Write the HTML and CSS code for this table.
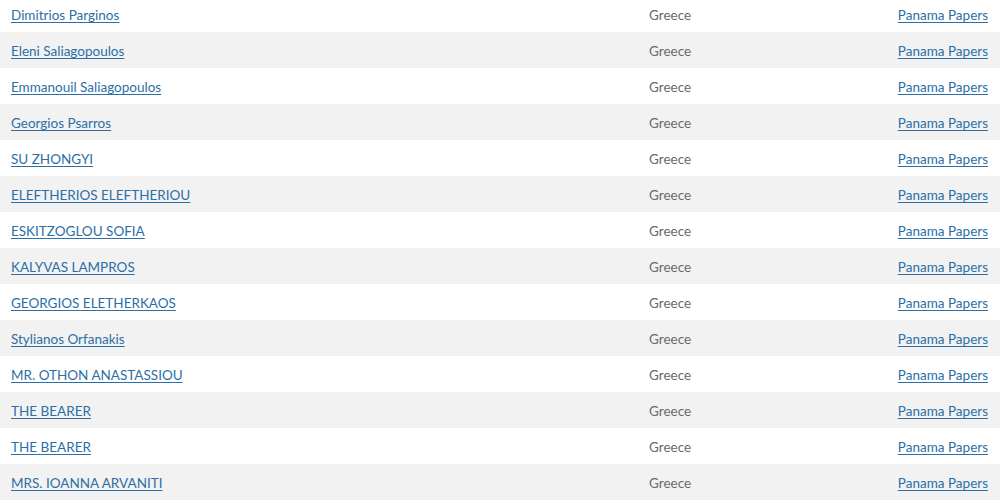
FILE: index.html
```html
<!DOCTYPE html>
<html>
<head>
<meta charset="utf-8">
<link rel="stylesheet" href="styles.css">
</head>
<body>
<table class="results">
  <colgroup><col class="c-name"><col class="c-country"><col class="c-source"></colgroup>
  <tbody>
    <tr><td><a href="#">Dimitrios Parginos</a></td><td class="country">Greece</td><td class="source"><a href="#">Panama Papers</a></td></tr>
    <tr><td><a href="#">Eleni Saliagopoulos</a></td><td class="country">Greece</td><td class="source"><a href="#">Panama Papers</a></td></tr>
    <tr><td><a href="#">Emmanouil Saliagopoulos</a></td><td class="country">Greece</td><td class="source"><a href="#">Panama Papers</a></td></tr>
    <tr><td><a href="#">Georgios Psarros</a></td><td class="country">Greece</td><td class="source"><a href="#">Panama Papers</a></td></tr>
    <tr><td><a href="#">SU ZHONGYI</a></td><td class="country">Greece</td><td class="source"><a href="#">Panama Papers</a></td></tr>
    <tr><td><a href="#">ELEFTHERIOS ELEFTHERIOU</a></td><td class="country">Greece</td><td class="source"><a href="#">Panama Papers</a></td></tr>
    <tr><td><a href="#">ESKITZOGLOU SOFIA</a></td><td class="country">Greece</td><td class="source"><a href="#">Panama Papers</a></td></tr>
    <tr><td><a href="#">KALYVAS LAMPROS</a></td><td class="country">Greece</td><td class="source"><a href="#">Panama Papers</a></td></tr>
    <tr><td><a href="#">GEORGIOS ELETHERKAOS</a></td><td class="country">Greece</td><td class="source"><a href="#">Panama Papers</a></td></tr>
    <tr><td><a href="#">Stylianos Orfanakis</a></td><td class="country">Greece</td><td class="source"><a href="#">Panama Papers</a></td></tr>
    <tr><td><a href="#">MR. OTHON ANASTASSIOU</a></td><td class="country">Greece</td><td class="source"><a href="#">Panama Papers</a></td></tr>
    <tr><td><a href="#">THE BEARER</a></td><td class="country">Greece</td><td class="source"><a href="#">Panama Papers</a></td></tr>
    <tr><td><a href="#">THE BEARER</a></td><td class="country">Greece</td><td class="source"><a href="#">Panama Papers</a></td></tr>
    <tr><td><a href="#">MRS. IOANNA ARVANITI</a></td><td class="country">Greece</td><td class="source"><a href="#">Panama Papers</a></td></tr>
  </tbody>
</table>
</body>
</html>
```
FILE: styles.css
```css
html, body {
  margin: 0;
  padding: 0;
  background: #ffffff;
}
body {
  font-family: "Source Sans Pro", Lato, "Liberation Sans", sans-serif;
  font-size: 13.5px;
  color: #666666;
  overflow: hidden;
}
.results {
  width: 1000px;
  border-collapse: collapse;
  table-layout: fixed;
  margin-top: -4px;
}
.c-name { width: 638px; }
.c-country { width: 220px; }
.c-source { width: 142px; }
.results td {
  height: 36px;
  padding: 2px 12px 0 11px;
  box-sizing: border-box;
  vertical-align: middle;
  line-height: 20px;
  white-space: nowrap;
}
.results tr:nth-child(even) td {
  background: #f2f2f2;
}
.results td.source {
  text-align: right;
}
.results a {
  color: #2c6fa6;
  text-decoration: underline;
  text-underline-offset: 2px;
}
.country {
  color: #6a6a6a;
}
```
